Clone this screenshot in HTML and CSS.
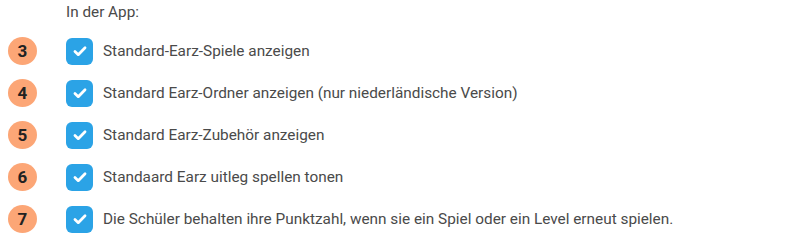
FILE: index.html
```html
<!DOCTYPE html>
<html lang="de">
<head>
    <meta charset="UTF-8">
    <meta name="viewport" content="width=device-width, initial-scale=1.0">
    <title>Einstellungen</title>
    <link rel="stylesheet" href="styles.css">
</head>
<body>
    <div class="settings">
        <p class="section-title">In der App:</p>

        <ul class="option-list">
            <li class="option">
                <span class="step">3</span>
                <span class="check"><svg viewBox="0 0 24 24"><path d="M6.5 12.5l3.6 3.5 7.4-7.6"/></svg></span>
                <span class="option-text">Standard-Earz-Spiele anzeigen</span>
            </li>
            <li class="option">
                <span class="step">4</span>
                <span class="check"><svg viewBox="0 0 24 24"><path d="M6.5 12.5l3.6 3.5 7.4-7.6"/></svg></span>
                <span class="option-text">Standard Earz-Ordner anzeigen (nur niederländische Version)</span>
            </li>
            <li class="option">
                <span class="step">5</span>
                <span class="check"><svg viewBox="0 0 24 24"><path d="M6.5 12.5l3.6 3.5 7.4-7.6"/></svg></span>
                <span class="option-text">Standard Earz-Zubehör anzeigen</span>
            </li>
            <li class="option">
                <span class="step">6</span>
                <span class="check"><svg viewBox="0 0 24 24"><path d="M6.5 12.5l3.6 3.5 7.4-7.6"/></svg></span>
                <span class="option-text">Standaard Earz uitleg spellen tonen</span>
            </li>
            <li class="option">
                <span class="step">7</span>
                <span class="check"><svg viewBox="0 0 24 24"><path d="M6.5 12.5l3.6 3.5 7.4-7.6"/></svg></span>
                <span class="option-text">Die Schüler behalten ihre Punktzahl, wenn sie ein Spiel oder ein Level erneut spielen.</span>
            </li>
        </ul>
    </div>
</body>
</html>
```

FILE: styles.css
```css
* {
    margin: 0;
    padding: 0;
    box-sizing: border-box;
}

body {
    font-family: Roboto, 'Liberation Sans', sans-serif;
    background-color: #fff;
    color: #444;
}

.settings {
    padding: 2px 0 0 8px;
}

.section-title {
    font-size: 15.3px;
    line-height: 20px;
    padding-left: 58px;
    color: #4a4a4a;
}

.option-list {
    list-style: none;
    margin-top: 8px;
}

.option {
    display: flex;
    align-items: center;
    height: 42px;
}

.step {
    width: 29px;
    height: 28px;
    border-radius: 50%;
    background-color: #fca676;
    color: #222;
    font-weight: bold;
    font-size: 17px;
    display: flex;
    align-items: center;
    justify-content: center;
    margin-right: 29px;
}

.check {
    width: 27px;
    height: 27px;
    border-radius: 6px;
    background-color: #2ba3e6;
    display: flex;
    align-items: center;
    justify-content: center;
    margin-right: 10px;
}

.check svg {
    width: 22px;
    height: 22px;
    fill: none;
    stroke: #fff;
    stroke-width: 3;
    stroke-linecap: round;
    stroke-linejoin: round;
}

.option-text {
    font-size: 15.35px;
    color: #4a4a4a;
}
```
